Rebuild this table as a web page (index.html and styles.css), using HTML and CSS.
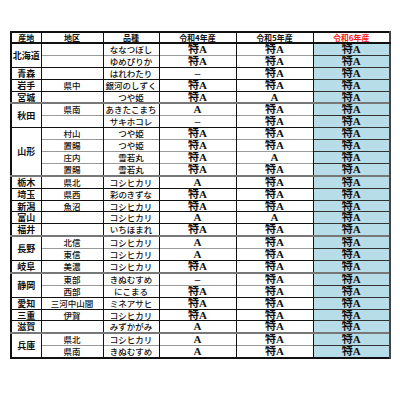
FILE: index.html
```html
<!DOCTYPE html>
<html lang="ja">
<head>
<meta charset="utf-8">
<link rel="stylesheet" href="styles.css">
</head>
<body>
<table class="rice">
<colgroup>
<col class="c-pref"><col class="c-area"><col class="c-var"><col class="c-y"><col class="c-y"><col class="c-y6">
</colgroup>
<thead>
<tr class="head"><th>産地</th><th>地区</th><th>品種</th><th>令和4年産</th><th>令和5年産</th><th class="new">令和6年産</th></tr>
</thead>
<tbody>
<tr class="g"><td class="pref" rowspan="2">北海道</td><td></td><td>ななつぼし</td><td class="r">特A</td><td class="r">特A</td><td class="r b">特A</td></tr>
<tr class="s"><td></td><td>ゆめぴりか</td><td class="r">特A</td><td class="r">特A</td><td class="r b">特A</td></tr>
<tr class="g"><td class="pref">青森</td><td></td><td>はれわたり</td><td class="r">–</td><td class="r">特A</td><td class="r b">特A</td></tr>
<tr class="g"><td class="pref">岩手</td><td>県中</td><td>銀河のしずく</td><td class="r">特A</td><td class="r">特A</td><td class="r b">特A</td></tr>
<tr class="g"><td class="pref">宮城</td><td></td><td>つや姫</td><td class="r">特A</td><td class="r">A</td><td class="r b">特A</td></tr>
<tr class="gb"><td class="pref" rowspan="2">秋田</td><td>県南</td><td>あきたこまち</td><td class="r">A</td><td class="r">特A</td><td class="r b">特A</td></tr>
<tr class="s"><td></td><td>サキホコレ</td><td class="r">–</td><td class="r">特A</td><td class="r b">特A</td></tr>
<tr class="g"><td class="pref" rowspan="4">山形</td><td>村山</td><td>つや姫</td><td class="r">特A</td><td class="r">特A</td><td class="r b">特A</td></tr>
<tr class="s"><td>置賜</td><td>つや姫</td><td class="r">特A</td><td class="r">特A</td><td class="r b">特A</td></tr>
<tr class="s"><td>庄内</td><td>雪若丸</td><td class="r">特A</td><td class="r">A</td><td class="r b">特A</td></tr>
<tr class="s"><td>置賜</td><td>雪若丸</td><td class="r">特A</td><td class="r">特A</td><td class="r b">特A</td></tr>
<tr class="gb"><td class="pref">栃木</td><td>県北</td><td>コシヒカリ</td><td class="r">A</td><td class="r">特A</td><td class="r b">特A</td></tr>
<tr class="g"><td class="pref">埼玉</td><td>県西</td><td>彩のきずな</td><td class="r">特A</td><td class="r">特A</td><td class="r b">特A</td></tr>
<tr class="g"><td class="pref">新潟</td><td>魚沼</td><td>コシヒカリ</td><td class="r">特A</td><td class="r">特A</td><td class="r b">特A</td></tr>
<tr class="g"><td class="pref">富山</td><td></td><td>コシヒカリ</td><td class="r">A</td><td class="r">A</td><td class="r b">特A</td></tr>
<tr class="g"><td class="pref">福井</td><td></td><td>いちほまれ</td><td class="r">特A</td><td class="r">特A</td><td class="r b">特A</td></tr>
<tr class="gb"><td class="pref" rowspan="2">長野</td><td>北信</td><td>コシヒカリ</td><td class="r">A</td><td class="r">特A</td><td class="r b">特A</td></tr>
<tr class="s"><td>東信</td><td>コシヒカリ</td><td class="r">A</td><td class="r">特A</td><td class="r b">特A</td></tr>
<tr class="g"><td class="pref">岐阜</td><td>美濃</td><td>コシヒカリ</td><td class="r">特A</td><td class="r">特A</td><td class="r b">特A</td></tr>
<tr class="gb"><td class="pref" rowspan="2">静岡</td><td>東部</td><td>きぬむすめ</td><td class="r">–</td><td class="r">特A</td><td class="r b">特A</td></tr>
<tr class="s"><td>西部</td><td>にこまる</td><td class="r">特A</td><td class="r">特A</td><td class="r b">特A</td></tr>
<tr class="g"><td class="pref">愛知</td><td>三河中山間</td><td>ミネアサヒ</td><td class="r">特A</td><td class="r">特A</td><td class="r b">特A</td></tr>
<tr class="g"><td class="pref">三重</td><td>伊賀</td><td>コシヒカリ</td><td class="r">特A</td><td class="r">特A</td><td class="r b">特A</td></tr>
<tr class="g"><td class="pref">滋賀</td><td></td><td>みずかがみ</td><td class="r">A</td><td class="r">特A</td><td class="r b">特A</td></tr>
<tr class="gb"><td class="pref" rowspan="2">兵庫</td><td>県北</td><td>コシヒカリ</td><td class="r">A</td><td class="r">特A</td><td class="r b">特A</td></tr>
<tr class="s"><td>県南</td><td>きぬむすめ</td><td class="r">A</td><td class="r">特A</td><td class="r b">特A</td></tr>
</tbody>
</table>
</body>
</html>
```

FILE: styles.css
```css
html, body {
  margin: 0;
  padding: 0;
  background: #fff;
}

.rice {
  margin: 31px 0 0 10px;
  width: 379px;
  table-layout: fixed;
  border-collapse: collapse;
  border: 2px solid #111;
  font-family: "Noto Sans CJK JP", sans-serif;
  color: #111;
}

.c-pref { width: 30px; }
.c-area { width: 62px; }
.c-var { width: 56px; }
.c-y { width: 77px; }
.c-y6 { width: 77px; }

.rice th,
.rice td {
  padding: 0;
  text-align: center;
  vertical-align: middle;
  border-left: 1px solid #111;
  border-right: 1px solid #111;
  line-height: 9px;
  overflow: hidden;
  white-space: nowrap;
}

.rice th {
  height: 9px;
  font-size: 8px;
  font-weight: bold;
  border-bottom: 2px solid #111;
}

.rice th.new {
  color: #ff1a1a;
  border-right: 2px solid #444;
}

.rice td {
  height: 10.9px;
  font-size: 8.5px;
  font-weight: 500;
}

.rice td.pref {
  font-size: 9px;
  font-weight: bold;
}

.rice td.r {
  font-family: "Liberation Serif", "Noto Sans CJK JP", serif;
  font-size: 11px;
  font-weight: bold;
}

.rice td.b {
  background: #b7dde8;
  border-left: 1px solid #333;
  border-right: 2px solid #444;
}

.g td { border-top: 1px solid #111; }
.s td { border-top: 1px solid #9a9a9a; }
.gb td { border-top: 2px solid #777; }
.rice .s td.b, .rice .g td.b { border-top-color: #333; }
```
